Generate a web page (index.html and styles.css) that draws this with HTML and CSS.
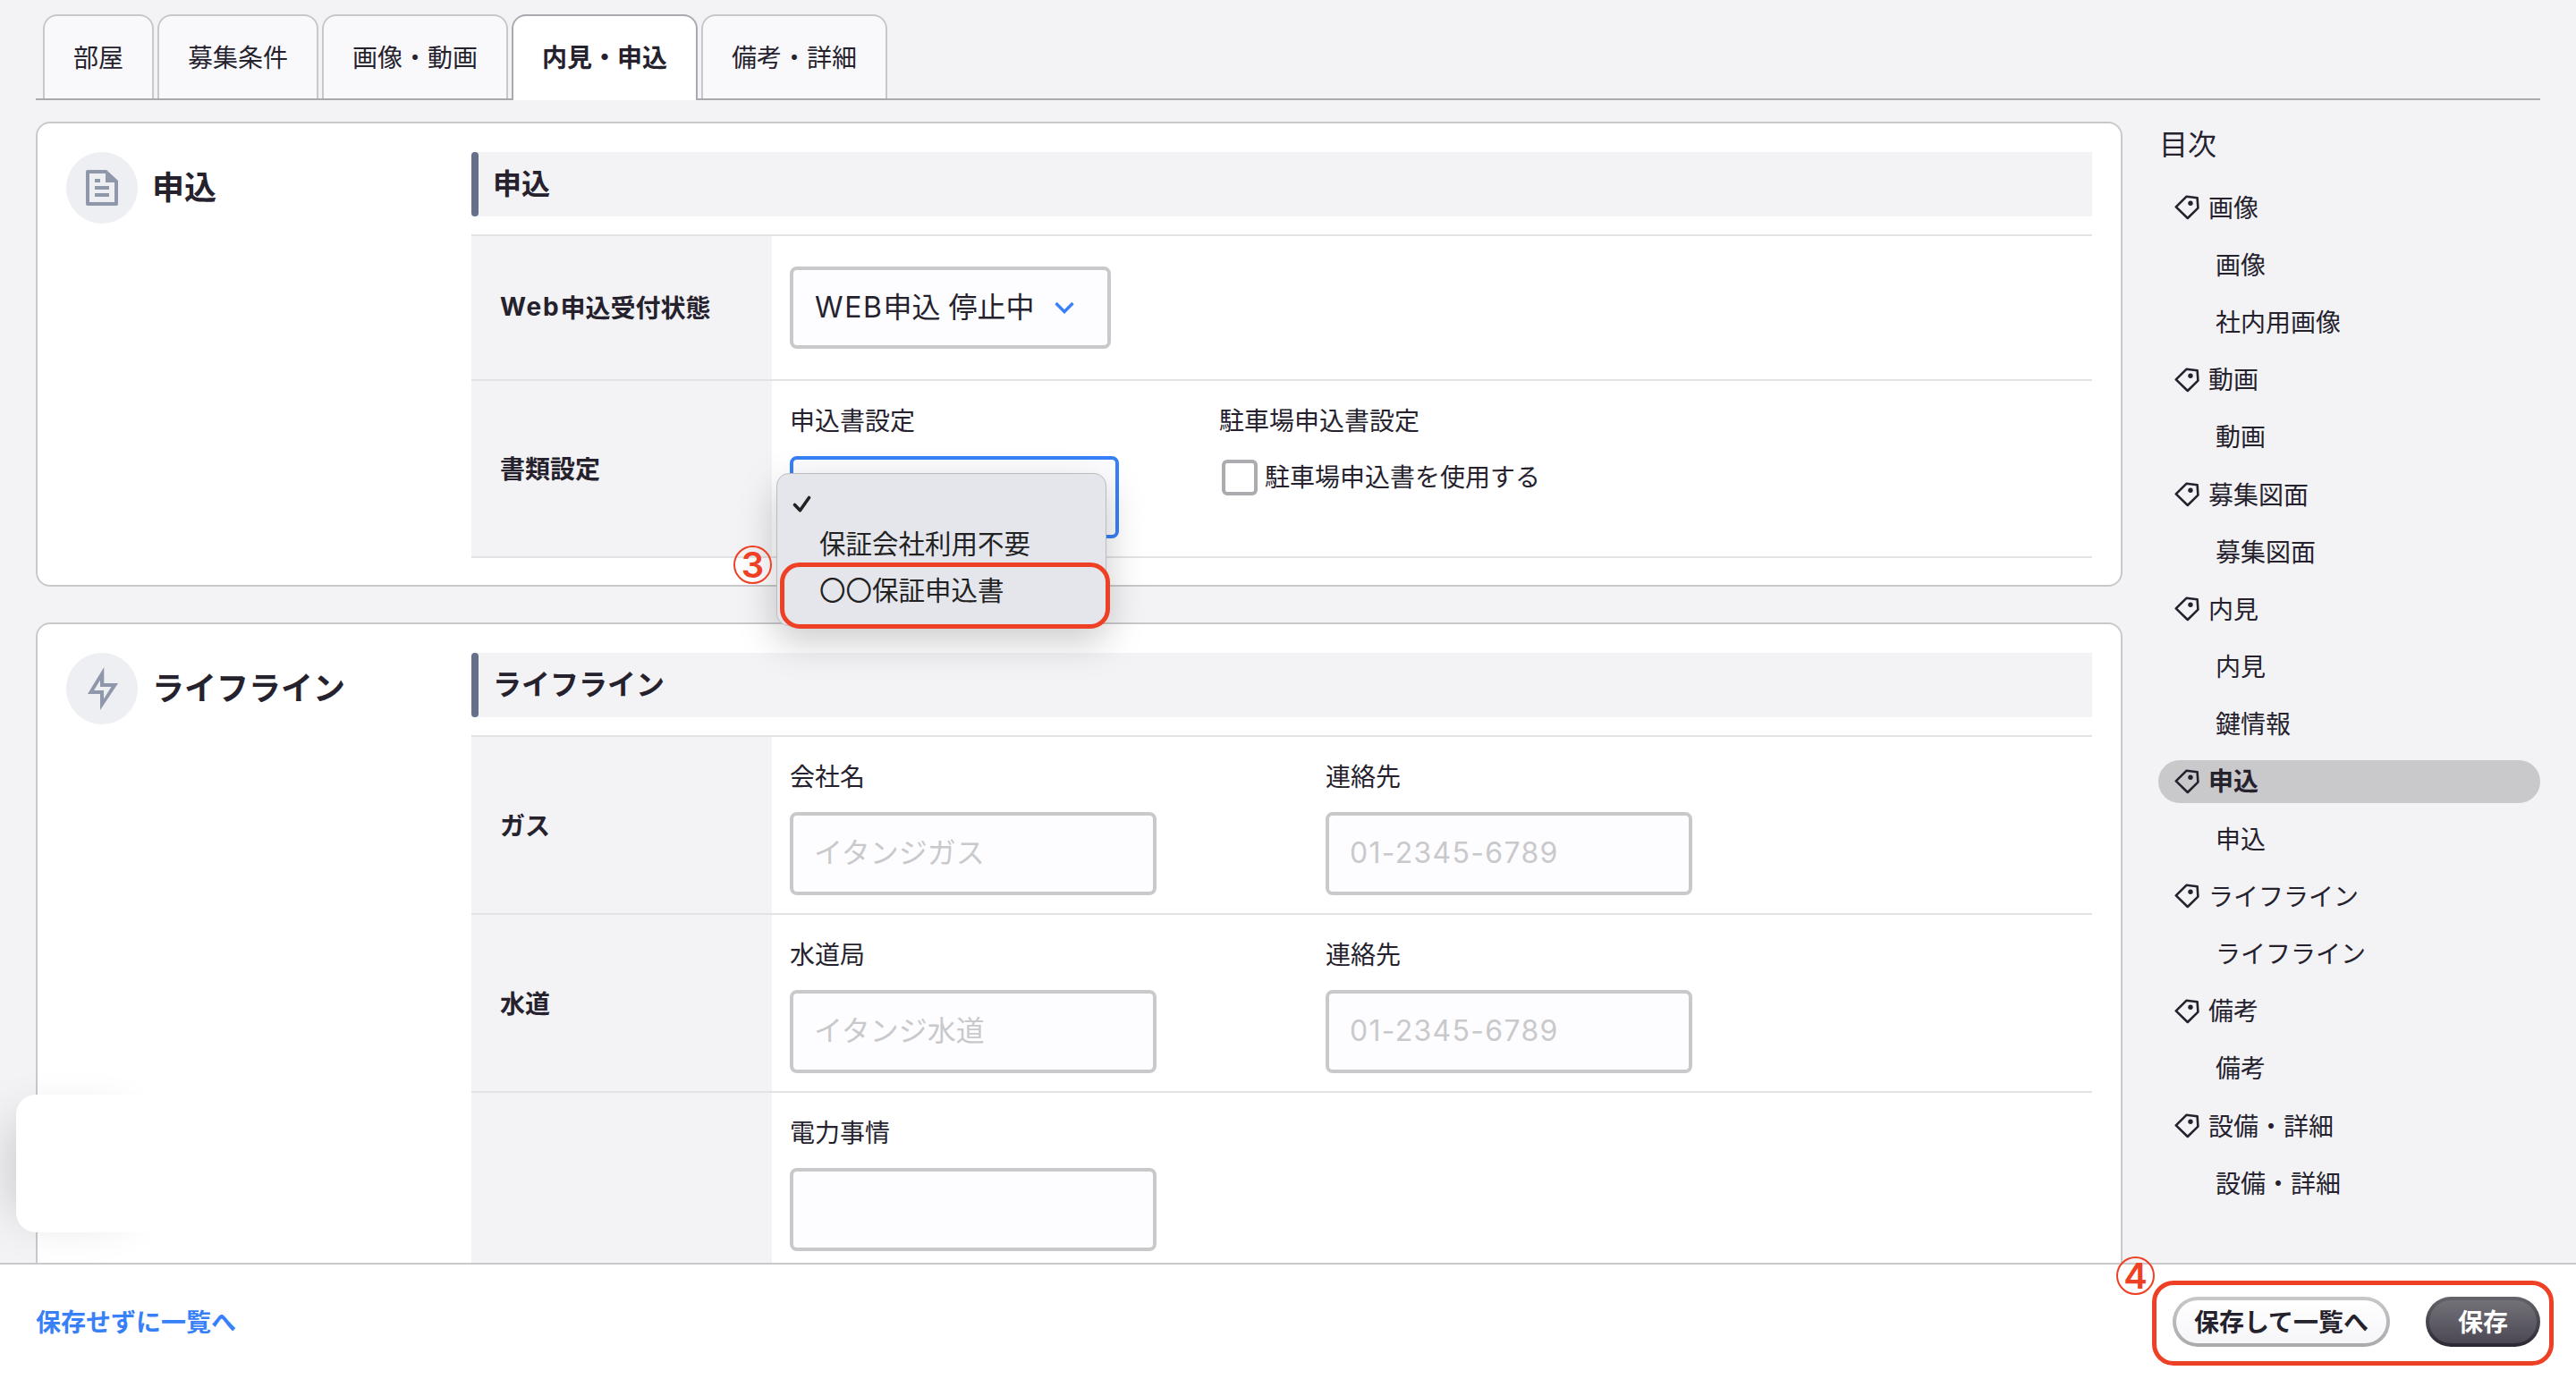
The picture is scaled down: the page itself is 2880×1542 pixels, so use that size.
FILE: index.html
```html
<!DOCTYPE html>
<html lang="ja">

<head>
    <meta charset="UTF-8">
    <meta name="viewport" content="width=device-width, initial-scale=1.0">
    <title>内見・申込</title>
    <link rel="stylesheet" href="styles.css">
</head>

<body>
    <svg class="defs" width="0" height="0">
        <symbol id="icon-tag" viewBox="0 0 28 28">
            <path d="M1.8 13.4 L13.4 1.8 L25.6 3.2 L26.4 14.6 L14.8 26 Z" fill="none" stroke="#25222e" stroke-width="2.6" stroke-linejoin="round" />
            <circle cx="18" cy="9.2" r="2.7" fill="#25222e" />
        </symbol>
    </svg>

    <nav class="tabs">
        <a class="tab">部屋</a>
        <a class="tab">募集条件</a>
        <a class="tab">画像・動画</a>
        <a class="tab active">内見・申込</a>
        <a class="tab">備考・詳細</a>
    </nav>

    <div class="page">
        <main class="main">
            <section class="card">
                <div class="card-side">
                    <span class="card-icon">
                        <svg width="80" height="80" viewBox="0 0 80 80">
                            <path d="M24 20 h21 l13 12 v26 a2 2 0 0 1 -2 2 h-32 a2 2 0 0 1 -2 -2 v-36 a2 2 0 0 1 2 -2 z" fill="#8f97aa" />
                            <path d="M26 24 h18 v10 h10 v22 h-28 z" fill="#eeeff3" />
                            <path d="M32 30 h6 v4 h-6 z M32 38 h16 v4 h-16 z M32 46 h16 v4 h-16 z" fill="#8f97aa" />
                        </svg>
                    </span>
                    <h2>申込</h2>
                </div>
                <div class="card-body">
                    <h3 class="heading">申込</h3>
                    <div class="table">
                        <div class="row row-status">
                            <div class="label"><span class="latin-label">Web</span>申込受付状態</div>
                            <div class="cell">
                                <div class="select">
                                    <span><span class="latin">WEB</span>申込 停止中</span>
                                    <svg width="24" height="16" viewBox="0 0 24 16">
                                        <path d="M2.5 3 L12 12.5 L21.5 3" fill="none" stroke="#3880f8" stroke-width="3.4" />
                                    </svg>
                                </div>
                            </div>
                        </div>
                        <div class="row row-docs">
                            <div class="label">書類設定</div>
                            <div class="cell">
                                <div class="field field-docs">
                                    <p>申込書設定</p>
                                    <div class="select-open">
                                        <div class="menu">
                                            <div class="option option-empty">
                                                <svg width="22" height="20" viewBox="0 0 22 20">
                                                    <path d="M2.5 10.5 L8.5 16.8 L18.5 2.5" fill="none" stroke="#222" stroke-width="3.6" stroke-linecap="round" stroke-linejoin="round" />
                                                </svg>
                                            </div>
                                            <div class="option">保証会社利用不要</div>
                                            <div class="option">〇〇保証申込書</div>
                                            <div class="marker marker-option"></div>
                                            <span class="step step-3">3</span>
                                        </div>
                                    </div>
                                </div>
                                <div class="field">
                                    <p>駐車場申込書設定</p>
                                    <label class="check"><span class="box"></span>駐車場申込書を使用する</label>
                                </div>
                            </div>
                        </div>
                    </div>
                </div>
            </section>

            <section class="card card-last">
                <div class="card-side">
                    <span class="card-icon">
                        <svg width="80" height="80" viewBox="0 0 80 80">
                            <path fill-rule="evenodd" d="M42.3 16 L24 46 H38 V64 L58 34 H42.3 Z M38 30.5 V38 H50.5 L42 51.5 V42 H31 Z" fill="#8f97aa" />
                        </svg>
                    </span>
                    <h2>ライフライン</h2>
                </div>
                <div class="card-body">
                    <h3 class="heading">ライフライン</h3>
                    <div class="table">
                        <div class="row">
                            <div class="label">ガス</div>
                            <div class="cell">
                                <div class="field">
                                    <p>会社名</p>
                                    <div class="input">イタンジガス</div>
                                </div>
                                <div class="field">
                                    <p>連絡先</p>
                                    <div class="input tel">01-2345-6789</div>
                                </div>
                            </div>
                        </div>
                        <div class="row">
                            <div class="label">水道</div>
                            <div class="cell">
                                <div class="field">
                                    <p>水道局</p>
                                    <div class="input">イタンジ水道</div>
                                </div>
                                <div class="field">
                                    <p>連絡先</p>
                                    <div class="input tel">01-2345-6789</div>
                                </div>
                            </div>
                        </div>
                        <div class="row">
                            <div class="label"></div>
                            <div class="cell">
                                <div class="field">
                                    <p>電力事情</p>
                                    <div class="input"></div>
                                </div>
                            </div>
                        </div>
                    </div>
                </div>
            </section>
        </main>

        <aside class="toc">
            <h4>目次</h4>
            <a class="toc-item"><svg><use href="#icon-tag" /></svg>画像</a>
            <a class="toc-item sub">画像</a>
            <a class="toc-item sub">社内用画像</a>
            <a class="toc-item"><svg><use href="#icon-tag" /></svg>動画</a>
            <a class="toc-item sub">動画</a>
            <a class="toc-item"><svg><use href="#icon-tag" /></svg>募集図面</a>
            <a class="toc-item sub">募集図面</a>
            <a class="toc-item"><svg><use href="#icon-tag" /></svg>内見</a>
            <a class="toc-item sub">内見</a>
            <a class="toc-item sub">鍵情報</a>
            <a class="toc-item active"><svg><use href="#icon-tag" /></svg>申込</a>
            <a class="toc-item sub">申込</a>
            <a class="toc-item"><svg><use href="#icon-tag" /></svg>ライフライン</a>
            <a class="toc-item sub">ライフライン</a>
            <a class="toc-item"><svg><use href="#icon-tag" /></svg>備考</a>
            <a class="toc-item sub">備考</a>
            <a class="toc-item"><svg><use href="#icon-tag" /></svg>設備・詳細</a>
            <a class="toc-item sub">設備・詳細</a>
        </aside>
    </div>

    <footer class="footer">
        <a class="back">保存せずに一覧へ</a>
        <div class="actions">
            <button class="btn">保存して一覧へ</button>
            <button class="btn btn-dark">保存</button>
            <div class="marker marker-actions"></div>
            <span class="step step-4">4</span>
        </div>
    </footer>

    <div class="widget"></div>
</body>

</html>
```

FILE: styles.css
```css
* {
    box-sizing: border-box;
}

body {
    margin: 0;
    width: 2880px;
    height: 1542px;
    overflow: hidden;
    display: flex;
    flex-direction: column;
    position: relative;
    background: #f3f3f6;
    color: #25222e;
    font-family: Inter, "Noto Sans CJK JP", sans-serif;
    font-size: 28px;
}

h2,
h3,
h4,
p {
    margin: 0;
}

.defs {
    position: absolute;
}

/* tabs */
.tabs {
    flex: none;
    display: flex;
    gap: 4px;
    height: 112px;
    margin: 0 40px;
    padding: 16px 8px 0;
    box-shadow: inset 0 -2px #a9aaae;
}

.tab {
    height: 94px;
    padding: 0 32px;
    border: 2px solid #c8c8cb;
    border-bottom: none;
    border-radius: 16px 16px 0 0;
    background: #f9f9fc;
    line-height: 94px;
}

.tab.active {
    height: 96px;
    border-color: #a9a9b0;
    background: #fff;
    font-weight: bold;
}

/* layout */
.page {
    flex: 1;
    min-height: 0;
    display: flex;
    padding: 24px 40px 0;
}

.main {
    width: 2333px;
    height: 1276px;
    overflow: hidden;
}

.card {
    display: flex;
    height: 520px;
    margin-bottom: 40px;
    padding: 32px;
    border: 2px solid #c9c9cb;
    border-radius: 16px;
    background: #fff;
}

.card-last {
    height: 900px;
}

.card-side {
    width: 453px;
    display: flex;
    gap: 16px;
    height: 80px;
    align-items: center;
}

.card-icon {
    width: 80px;
    height: 80px;
    border-radius: 50%;
    background: #eeeff3;
}

.card-icon svg {
    display: block;
}

h2 {
    font-size: 36px;
    line-height: 80px;
}

.card-body {
    flex: 1;
}

.heading {
    position: relative;
    height: 72px;
    padding-left: 24px;
    background: #f3f3f6;
    font-size: 32px;
    line-height: 72px;
}

.heading::before {
    content: "";
    position: absolute;
    left: 0;
    top: 0;
    width: 8px;
    height: 72px;
    border-radius: 4px;
    background: #66708a;
}

.table {
    margin-top: 20px;
    border-top: 2px solid #e3e3e4;
}

.row {
    display: flex;
    height: 199px;
    border-bottom: 2px solid #e3e3e4;
}

.row-status {
    height: 162px;
}

.row-docs {
    height: 198px;
}

.label {
    width: 336px;
    padding: 0 0 2px 32px;
    display: flex;
    align-items: center;
    background: #f3f3f5;
    font-weight: bold;
}

.latin-label {
    letter-spacing: 1.8px;
}

.latin {
    letter-spacing: 1.6px;
}

.cell {
    flex: 1;
    display: flex;
    padding: 22px 20px 0;
}

.row-status .cell {
    padding-top: 34px;
}

.field {
    width: 599px;
}

.field-docs {
    width: 480px;
}

.field p {
    height: 44px;
    margin-bottom: 18px;
    line-height: 46px;
}

.input,
.select {
    height: 93px;
    border: 4px solid #c9c9cb;
    border-radius: 8px;
    background: #fdfdff;
    font-size: 32px;
    line-height: 84px;
}

.input {
    width: 410px;
    padding-left: 23px;
    color: #c9c9cc;
}

.tel {
    letter-spacing: 1.3px;
}

.select {
    display: flex;
    align-items: center;
    gap: 21px;
    width: 359px;
    height: 92px;
    padding-left: 24px;
}

.select-open {
    position: relative;
    width: 368px;
    height: 92px;
    border: 4px solid #3880f8;
    border-radius: 8px;
    background: #fdfdff;
}

/* opened list */
.menu {
    position: absolute;
    z-index: 2;
    left: -19px;
    top: 15px;
    width: 369px;
    height: 171px;
    padding: 8px 0;
    border: 1px solid #bbbbc0;
    border-radius: 14px;
    background: #e5e6ec;
    box-shadow: 0 16px 44px rgba(0, 0, 0, 0.22);
    color: #222;
}

.option {
    height: 52px;
    padding-left: 47px;
    font-size: 29.5px;
    line-height: 53px;
}

.option-empty {
    height: 44px;
    padding: 16px 0 0 17px;
    line-height: 0;
}

.check {
    display: flex;
    align-items: center;
    gap: 8px;
    margin-top: 22px;
    padding-left: 3px;
    height: 40px;
    line-height: 42px;
}

.box {
    width: 40px;
    height: 40px;
    border: 4px solid #abacb0;
    border-radius: 6px;
    background: #fff;
}

/* contents */
.toc {
    width: 427px;
    margin-left: 40px;
}

.toc h4 {
    height: 52px;
    margin-bottom: 20px;
    padding-left: 1px;
    font-size: 32px;
    font-weight: normal;
    line-height: 52px;
}

.toc-item {
    display: flex;
    align-items: center;
    height: 48.2px;
    margin-bottom: 16px;
    padding: 0 0 3px 18px;
    border-radius: 25px;
}

.toc-item svg {
    width: 28px;
    height: 28px;
    margin: 3px 10px 0 0;
}

.toc-item.sub {
    padding-left: 64px;
}

.toc-item.active {
    background: #c9c9cb;
    font-weight: bold;
}

/* footer */
.footer {
    position: relative;
    flex: none;
    display: flex;
    align-items: center;
    justify-content: space-between;
    height: 130px;
    padding: 0 40px;
    border-top: 2px solid #c9c9cb;
    background: #fff;
}

.back {
    padding-bottom: 2px;
    color: #3880f8;
    font-weight: bold;
}

.actions {
    position: relative;
    display: flex;
    gap: 40px;
}

.btn {
    width: 243px;
    height: 56px;
    padding: 2px 0 0;
    border: 4px solid transparent;
    border-radius: 28px;
    background: linear-gradient(#fff, #f6f6f9) padding-box, linear-gradient(#c8c8ca, #aaaaac) border-box;
    color: #25222e;
    font: bold 28px/46px Inter, "Noto Sans CJK JP", sans-serif;
}

.btn-dark {
    width: 128px;
    background: linear-gradient(#737178, #4b4853) padding-box, linear-gradient(#66646b, #2b2833) border-box;
    color: #fff;
}

/* annotations */
.marker {
    position: absolute;
    border: 5px solid #ee4025;
}

.marker-option {
    left: 3px;
    top: 99px;
    width: 369px;
    height: 74px;
    border-radius: 22px;
}

.marker-actions {
    left: -23px;
    top: -18px;
    width: 449px;
    height: 95px;
    border-radius: 24px;
}

.step {
    position: absolute;
    width: 43px;
    height: 43px;
    border: 2px solid #ee4025;
    border-radius: 50%;
    color: #ee4025;
    font: 600 40px/39px Inter, sans-serif;
    text-align: center;
}

.step-3 {
    left: -49px;
    top: 80px;
}

.step-4 {
    left: -63px;
    top: -45px;
}

.widget {
    position: absolute;
    left: 18px;
    top: 1224px;
    width: 172px;
    height: 154px;
    border-radius: 22px;
    background: #fff;
    box-shadow: -28px 4px 56px -26px rgba(0, 0, 0, 0.2);
}
```
